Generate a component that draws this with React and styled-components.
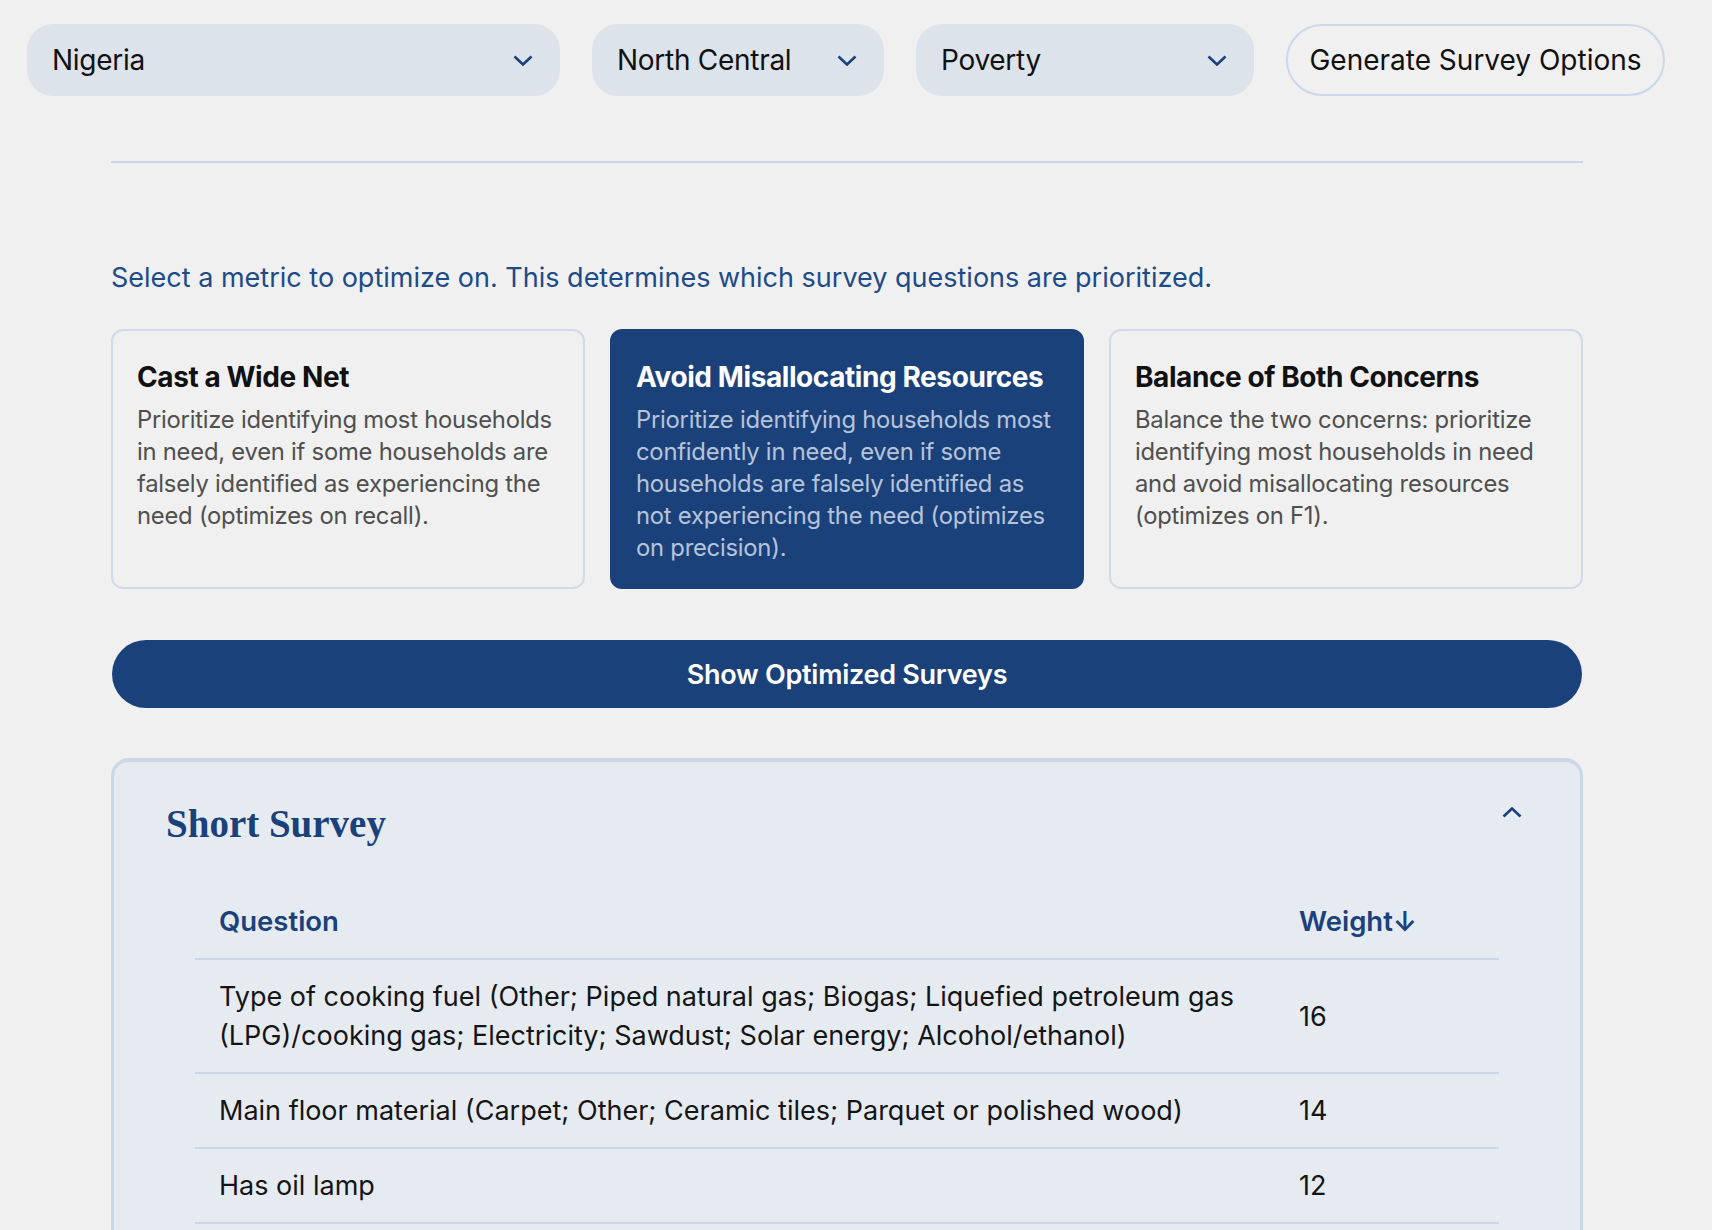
import styled, { createGlobalStyle } from "styled-components";

const GlobalStyle = createGlobalStyle`
  body {
    margin: 0;
    background: #f0f0f0;
    font-family: Inter, "Noto Sans", sans-serif;
    color: #111;
  }
`;

const metrics = [
  {
    title: "Cast a Wide Net",
    text: "Prioritize identifying most households in need, even if some households are falsely identified as experiencing the need (optimizes on recall).",
  },
  {
    title: "Avoid Misallocating Resources",
    text: "Prioritize identifying households most confidently in need, even if some households are falsely identified as not experiencing the need (optimizes on precision).",
    active: true,
  },
  {
    title: "Balance of Both Concerns",
    text: "Balance the two concerns: prioritize identifying most households in need and avoid misallocating resources (optimizes on F1).",
  },
];

const questions = [
  {
    q: "Type of cooking fuel (Other; Piped natural gas; Biogas; Liquefied petroleum gas (LPG)/cooking gas; Electricity; Sawdust; Solar energy; Alcohol/ethanol)",
    w: 16,
  },
  { q: "Main floor material (Carpet; Other; Ceramic tiles; Parquet or polished wood)", w: 14 },
  { q: "Has oil lamp", w: 12 },
];

function Chevron({ up }) {
  return (
    <svg width="20" height="11" viewBox="0 0 20 11" fill="none">
      <polyline
        points={up ? "1.5,9.5 10,1.5 18.5,9.5" : "1.5,1.5 10,9.5 18.5,1.5"}
        stroke="#1b417a"
        strokeWidth="2.6"
      />
    </svg>
  );
}

export default function App() {
  return (
    <>
      <GlobalStyle />
      <Page>
        <TopBar>
          <Select width={533}>
            <span>Nigeria</span>
            <Chevron />
          </Select>
          <Select width={292}>
            <span>North Central</span>
            <Chevron />
          </Select>
          <Select width={338}>
            <span>Poverty</span>
            <Chevron />
          </Select>
          <GenerateButton>Generate Survey Options</GenerateButton>
        </TopBar>

        <Content>
          <Divider />
          <Intro>
            Select a metric to optimize on. This determines which survey questions are prioritized.
          </Intro>

          <Cards>
            {metrics.map((m) => (
              <Card key={m.title} active={m.active}>
                <CardTitle active={m.active}>{m.title}</CardTitle>
                <CardText active={m.active}>{m.text}</CardText>
              </Card>
            ))}
          </Cards>

          <ShowButton>Show Optimized Surveys</ShowButton>

          <Panel>
            <PanelHeader>
              <PanelTitle>Short Survey</PanelTitle>
              <Toggle>
                <Chevron up />
              </Toggle>
            </PanelHeader>
            <Table>
              <thead>
                <tr>
                  <Th>Question</Th>
                  <Th weight>Weight↓</Th>
                </tr>
              </thead>
              <tbody>
                {questions.map((row) => (
                  <tr key={row.q}>
                    <Td>{row.q}</Td>
                    <Td weight>{row.w}</Td>
                  </tr>
                ))}
              </tbody>
            </Table>
          </Panel>
        </Content>
      </Page>
    </>
  );
}

const Page = styled.div`
  padding: 24px 46px 0 27px;
`;

const TopBar = styled.div`
  display: flex;
  align-items: center;
  gap: 32px;
  height: 72px;
`;

const Select = styled.div`
  width: ${({ width }) => width}px;
  height: 72px;
  box-sizing: border-box;
  display: flex;
  align-items: center;
  justify-content: space-between;
  padding: 0 27px 0 25px;
  background: #dde3eb;
  border-radius: 26px;
  font-size: 28px;
  letter-spacing: -0.01em;
  color: #111;
`;

const GenerateButton = styled.button`
  width: 379px;
  height: 72px;
  box-sizing: border-box;
  background: transparent;
  border: 2px solid #cbd8ea;
  border-radius: 36px;
  font-family: inherit;
  font-size: 28px;
  color: #111;
  cursor: pointer;
`;

const Content = styled.div`
  width: 1472px;
  margin-left: 84px;
`;

const Divider = styled.div`
  margin-top: 65px;
  height: 2px;
  background: #cbd7e6;
`;

const Intro = styled.p`
  margin: 96px 0 0;
  font-size: 27px;
  line-height: 38px;
  color: #1d4a89;
`;

const Cards = styled.div`
  display: grid;
  grid-template-columns: repeat(3, 1fr);
  gap: 25px;
  margin-top: 32px;
`;

const Card = styled.div`
  height: 260px;
  box-sizing: border-box;
  padding: 27px 24px 24px;
  border-radius: 12px;
  border: 2px solid ${({ active }) => (active ? "#1b417a" : "#d0dbea")};
  background: ${({ active }) => (active ? "#1b417a" : "transparent")};
  cursor: pointer;
`;

const CardTitle = styled.h3`
  margin: 0;
  font-size: 28px;
  line-height: 38px;
  font-weight: 700;
  letter-spacing: -0.015em;
  color: ${({ active }) => (active ? "#ffffff" : "#111")};
`;

const CardText = styled.p`
  margin: 8px 0 0;
  font-size: 23.8px;
  line-height: 32px;
  letter-spacing: -0.01em;
  color: ${({ active }) => (active ? "#b6c4da" : "#4f4f4f")};
`;

const ShowButton = styled.button`
  display: block;
  width: calc(100% - 2px);
  height: 68px;
  margin: 51px 1px 0;
  border: none;
  border-radius: 34px;
  background: #1b417a;
  color: #fff;
  font-family: inherit;
  font-size: 27px;
  font-weight: 600;
  letter-spacing: -0.01em;
  cursor: pointer;
`;

const Panel = styled.section`
  margin-top: 50px;
  background: #e6ebf2;
  border: 3px solid #cbd7e6;
  border-top-width: 4px;
  border-bottom: none;
  border-radius: 18px 18px 0 0;
  padding: 37px 52px 40px;
`;

const PanelHeader = styled.div`
  display: flex;
  justify-content: space-between;
  align-items: flex-start;
`;

const PanelTitle = styled.h2`
  margin: 0;
  font-family: "Liberation Serif", "DejaVu Serif", serif;
  font-size: 39px;
  line-height: 50px;
  font-weight: 700;
  color: #1b417a;
`;

const Toggle = styled.div`
  padding: 3px 6px 0 0;
  cursor: pointer;
`;

const Table = styled.table`
  width: calc(100% - 58px);
  margin: 36px 29px 0;
  border-collapse: collapse;
`;

const Th = styled.th`
  text-align: left;
  padding: 17px 24px;
  width: ${({ weight }) => (weight ? "176px" : "auto")};
  font-size: 27.5px;
  line-height: 39px;
  font-weight: 600;
  color: #1b417a;
  border-bottom: 2px solid #cbd7e6;
`;

const Td = styled.td`
  padding: 17px 24px;
  font-size: 27px;
  line-height: 39px;
  color: #151515;
  border-bottom: 2px solid #cbd7e6;
  vertical-align: middle;
`;
